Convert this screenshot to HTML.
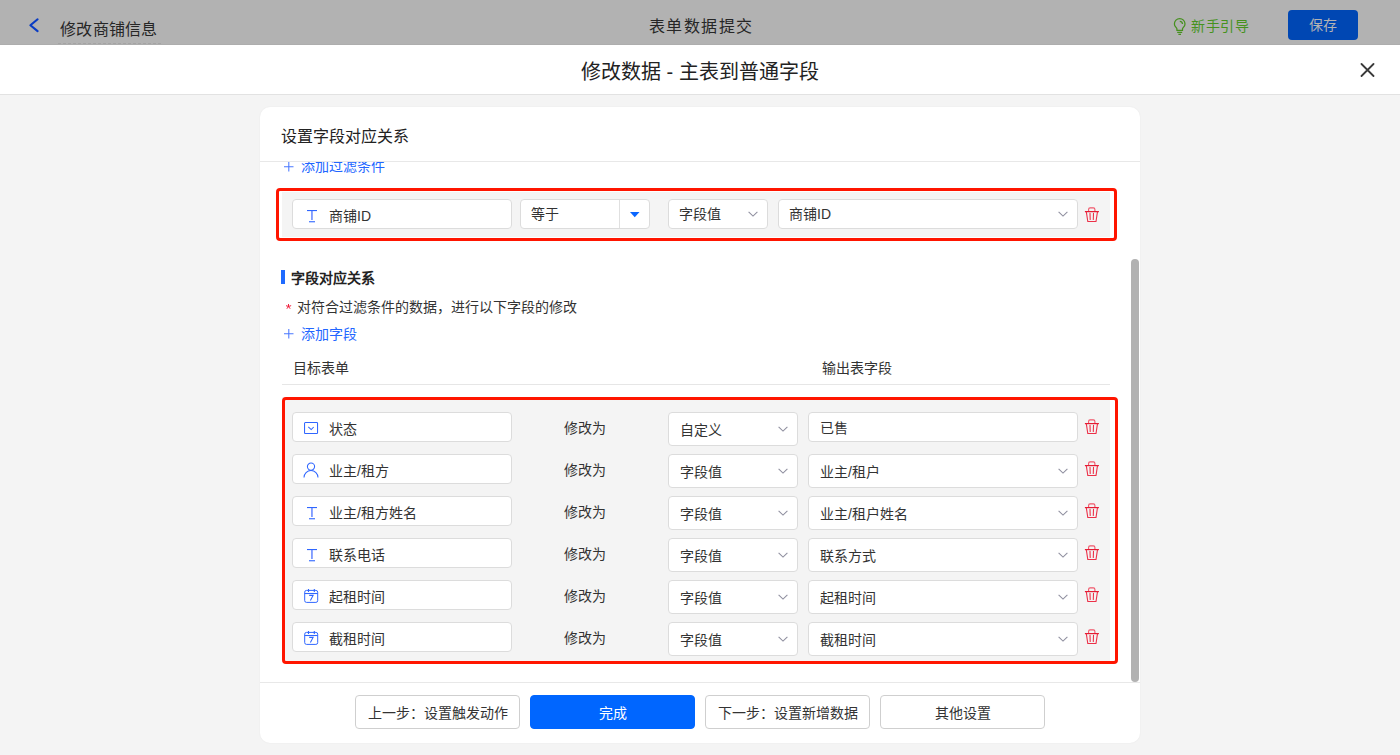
<!DOCTYPE html>
<html lang="zh-CN"><head><meta charset="utf-8">
<style>
*{box-sizing:border-box;margin:0;padding:0}
html,body{width:1400px;height:755px;overflow:hidden}
body{background:#f4f4f4;font-family:"Liberation Sans",sans-serif;color:#333;position:relative;font-size:14px}
.abs{position:absolute}
.t{position:absolute;white-space:nowrap;line-height:1}
#topbar{left:0;top:0;width:1400px;height:45px;background:#b2b2b2;border-bottom:1px solid #adadad}
#mhead{left:0;top:45px;width:1400px;height:50px;background:#fff;border-bottom:1px solid #e2e2e2}
#card{left:260px;top:107px;width:880px;height:636px;background:#fff;border-radius:10px;overflow:hidden;box-shadow:0 0 2px rgba(0,0,0,0.06)}
.inp{position:absolute;background:#fff;border:1px solid #dcdcdc;border-radius:4px;height:30px}
.gray{position:absolute;background:#f4f4f4}
.red{position:absolute;border:3px solid #ff1500;border-radius:4px}
.btn{position:absolute;top:588px;width:165px;height:34px;border:1px solid #cfcfcf;border-radius:4px;background:#fff;text-align:center;line-height:32px;padding-top:1px;font-size:14px;color:#333}
</style></head>
<body>
<div id="topbar" class="abs">
  <svg class="abs" style="left:28px;top:17px" width="13" height="17" viewBox="0 0 13 17"><path d="M9.6 2.3 L2.4 8.3 L9.6 14.1" fill="none" stroke="#0a3cc4" stroke-width="2.1" stroke-linecap="round" stroke-linejoin="round"/></svg>
  <div class="t" style="left:60px;top:22px;font-size:16px;color:#262626;letter-spacing:0.3px">修改商铺信息</div>
  <div class="abs" style="left:58px;top:43px;width:105px;height:1px;background:repeating-linear-gradient(90deg,#a4a4a4 0 3px,transparent 3px 5px)"></div>
  <div class="t" style="left:649px;top:19px;font-size:16px;color:#262626;letter-spacing:1.4px">表单数据提交</div>
  <svg class="abs" style="left:1173px;top:17px" width="14" height="19" viewBox="0 0 14 19"><path d="M3.9 13.4 V11.8 C3.9 10.6 1.4 9.6 1.4 6.9 A5.3 5.3 0 0 1 12 6.9 C12 9.6 9.5 10.6 9.5 11.8 V13.4 Z" fill="none" stroke="#46901e" stroke-width="1.25" stroke-linejoin="round"/><path d="M4.2 15.4 H9.2 M5.4 17.3 H8" stroke="#46901e" stroke-width="1.2"/><path d="M6.8 4.3 A2.9 2.9 0 0 1 9.5 7.1" fill="none" stroke="#46901e" stroke-width="1.3"/></svg>
  <div class="t" style="left:1191px;top:19px;font-size:14px;color:#46921e;letter-spacing:0.6px">新手引导</div>
  <div class="abs" style="left:1288px;top:10px;width:70px;height:30px;background:#0047b3;border-radius:4px"></div>
  <div class="t" style="left:1309px;top:18px;font-size:14px;color:#b3b3b3">保存</div>
</div>
<div id="mhead" class="abs">
  <div class="t" style="left:581px;top:17px;font-size:20px;color:#222">修改数据 - 主表到普通字段</div>
  <svg class="abs" style="left:1360px;top:18px" width="15" height="14" viewBox="0 0 15 14"><path d="M1.5 1 L13.5 13 M13.5 1 L1.5 13" stroke="#3a3a3a" stroke-width="1.8" stroke-linecap="round"/></svg>
</div>
<div id="card" class="abs">
  <div class="t" style="left:21px;top:22px;font-size:16px;color:#222">设置字段对应关系</div>
  <div class="abs" style="left:0;top:54px;width:880px;height:1px;background:#e8e8e8"></div>
  <div class="abs" id="scroll" style="left:0;top:55px;width:880px;height:520px;overflow:hidden">
<svg class="abs" style="left:24px;top:0px" width="10" height="10" viewBox="0 0 10 10"><path d="M4.8 0V9.5M0 4.8H9.5" stroke="#4a78ff" stroke-width="1.05"/></svg>
<div class="t" style="left:41px;top:-3px;font-size:14px;color:#2266ff;">添加过滤条件</div>
<div class="gray" style="left:22px;top:30px;width:828px;height:45px"></div>
<div class="inp" style="left:32px;top:37px;width:220px"></div>
<svg class="abs" style="left:47px;top:48px" width="11" height="13" viewBox="0 0 11 13"><rect x="0" y="0" width="10" height="1.1" fill="#2f66ff"/><rect x="4.3" y="1" width="1.3" height="9" fill="#4a72ff"/><rect x="2" y="11.2" width="6" height="1.1" fill="#2f66ff"/></svg>
<div class="t" style="left:69px;top:47px;font-size:14px;color:#333;">商铺ID</div>
<div class="inp" style="left:260px;top:37px;width:130px"><div class="abs" style="left:98px;top:0;width:1px;height:28px;background:#e0e0e0"></div></div>
<div class="t" style="left:271px;top:45px;font-size:14px;color:#333;">等于</div>
<svg class="abs" style="left:370px;top:50px" width="10" height="6" viewBox="0 0 10 6"><path d="M0 0 H9.5 L4.75 5.3 Z" fill="#0a66ff"/></svg>
<div class="inp" style="left:408px;top:37px;width:100px"></div>
<div class="t" style="left:419px;top:45px;font-size:14px;color:#333;">字段值</div>
<svg class="abs" style="left:488px;top:49px" width="11" height="7" viewBox="0 0 11 7"><path d="M0.6 0.8 L5 5.1 L9.4 0.8" fill="none" stroke="#9090a0" stroke-width="1.1"/></svg>
<div class="inp" style="left:518px;top:37px;width:300px"></div>
<div class="t" style="left:529px;top:45px;font-size:14px;color:#333;">商铺ID</div>
<svg class="abs" style="left:798px;top:49px" width="11" height="7" viewBox="0 0 11 7"><path d="M0.6 0.8 L5 5.1 L9.4 0.8" fill="none" stroke="#9090a0" stroke-width="1.1"/></svg>
<svg class="abs" style="left:824px;top:45px" width="16" height="16" viewBox="0 0 16 16"><path d="M4.6 4.3 V2.4 Q4.6 0.9 6.1 0.9 H9.4 Q10.9 0.9 10.9 2.4 V4.3" fill="none" stroke="#f0566a" stroke-width="1.1"/><path d="M0.9 4.6 H14.9" stroke="#e41a32" stroke-width="1.2"/><path d="M2.3 4.6 L3.8 14.5 H12.0 L13.5 4.6" fill="none" stroke="#ec3048" stroke-width="1.1"/><path d="M6.0 6.3 L6.2 12.5 M9.5 6.3 L9.3 12.5" stroke="#ec3048" stroke-width="1.1" stroke-linecap="round"/></svg>
<div class="red" style="left:16px;top:26px;width:841px;height:53px"></div>
<div class="abs" style="left:21px;top:108px;width:4px;height:14px;background:#1f6bff"></div>
<div class="t" style="left:31px;top:109px;font-size:14px;color:#222;font-weight:bold">字段对应关系</div>
<svg class="abs" style="left:26px;top:142px" width="6" height="6" viewBox="0 0 6 6"><path d="M2.5 2.5L2.50 0.10M2.5 2.5L4.78 1.76M2.5 2.5L3.91 4.44M2.5 2.5L1.09 4.44M2.5 2.5L0.22 1.76" stroke="#f01e3c" stroke-width="1" stroke-linecap="round"/></svg>
<div class="t" style="left:37px;top:138px;font-size:14px;color:#333;">对符合过滤条件的数据，进行以下字段的修改</div>
<svg class="abs" style="left:24px;top:167px" width="10" height="10" viewBox="0 0 10 10"><path d="M4.8 0V9.5M0 4.8H9.5" stroke="#4a78ff" stroke-width="1.05"/></svg>
<div class="t" style="left:41px;top:165px;font-size:14px;color:#2266ff;">添加字段</div>
<div class="t" style="left:33px;top:199px;font-size:14px;color:#333;">目标表单</div>
<div class="t" style="left:562px;top:199px;font-size:14px;color:#333;">输出表字段</div>
<div class="abs" style="left:22px;top:222px;width:828px;height:1px;background:#e6e6e6"></div>
<div class="gray" style="left:22px;top:235px;width:828px;height:264px"></div>
<div class="inp" style="left:32px;top:250px;width:220px"></div>
<svg class="abs" style="left:44px;top:260px" width="15" height="13" viewBox="0 0 15 13"><rect x="0.55" y="0.55" width="13" height="11" rx="0.8" fill="none" stroke="#2f66ff" stroke-width="1.05"/><path d="M4.3 4.9 L7.2 7.6 L9.7 5" fill="none" stroke="#2f66ff" stroke-width="1.05"/></svg>
<div class="t" style="left:69px;top:260px;font-size:14px;color:#333;">状态</div>
<div class="t" style="left:304px;top:259px;font-size:14px;color:#333;">修改为</div>
<div class="inp" style="left:408px;top:250px;width:130px;height:34px"></div>
<div class="t" style="left:420px;top:261px;font-size:14px;color:#333;">自定义</div>
<svg class="abs" style="left:518px;top:264px" width="11" height="7" viewBox="0 0 11 7"><path d="M0.6 0.8 L5 5.1 L9.4 0.8" fill="none" stroke="#9090a0" stroke-width="1.1"/></svg>
<div class="inp" style="left:548px;top:250px;width:270px"></div>
<div class="t" style="left:560px;top:259px;font-size:14px;color:#333;">已售</div>
<svg class="abs" style="left:824px;top:257px" width="16" height="16" viewBox="0 0 16 16"><path d="M4.6 4.3 V2.4 Q4.6 0.9 6.1 0.9 H9.4 Q10.9 0.9 10.9 2.4 V4.3" fill="none" stroke="#f0566a" stroke-width="1.1"/><path d="M0.9 4.6 H14.9" stroke="#e41a32" stroke-width="1.2"/><path d="M2.3 4.6 L3.8 14.5 H12.0 L13.5 4.6" fill="none" stroke="#ec3048" stroke-width="1.1"/><path d="M6.0 6.3 L6.2 12.5 M9.5 6.3 L9.3 12.5" stroke="#ec3048" stroke-width="1.1" stroke-linecap="round"/></svg>
<div class="inp" style="left:32px;top:292px;width:220px"></div>
<svg class="abs" style="left:43px;top:300px" width="16" height="16" viewBox="0 0 16 16"><circle cx="8" cy="4.6" r="3.6" fill="none" stroke="#2f66ff" stroke-width="1.05"/><path d="M1 15.5 A7 7 0 0 1 15 15.5" fill="none" stroke="#2f66ff" stroke-width="1.05"/></svg>
<div class="t" style="left:69px;top:302px;font-size:14px;color:#333;">业主/租方</div>
<div class="t" style="left:304px;top:301px;font-size:14px;color:#333;">修改为</div>
<div class="inp" style="left:408px;top:292px;width:130px;height:34px"></div>
<div class="t" style="left:420px;top:303px;font-size:14px;color:#333;">字段值</div>
<svg class="abs" style="left:518px;top:306px" width="11" height="7" viewBox="0 0 11 7"><path d="M0.6 0.8 L5 5.1 L9.4 0.8" fill="none" stroke="#9090a0" stroke-width="1.1"/></svg>
<div class="inp" style="left:548px;top:292px;width:270px;height:34px"></div>
<div class="t" style="left:560px;top:303px;font-size:14px;color:#333;">业主/租户</div>
<svg class="abs" style="left:798px;top:306px" width="11" height="7" viewBox="0 0 11 7"><path d="M0.6 0.8 L5 5.1 L9.4 0.8" fill="none" stroke="#9090a0" stroke-width="1.1"/></svg>
<svg class="abs" style="left:824px;top:299px" width="16" height="16" viewBox="0 0 16 16"><path d="M4.6 4.3 V2.4 Q4.6 0.9 6.1 0.9 H9.4 Q10.9 0.9 10.9 2.4 V4.3" fill="none" stroke="#f0566a" stroke-width="1.1"/><path d="M0.9 4.6 H14.9" stroke="#e41a32" stroke-width="1.2"/><path d="M2.3 4.6 L3.8 14.5 H12.0 L13.5 4.6" fill="none" stroke="#ec3048" stroke-width="1.1"/><path d="M6.0 6.3 L6.2 12.5 M9.5 6.3 L9.3 12.5" stroke="#ec3048" stroke-width="1.1" stroke-linecap="round"/></svg>
<div class="inp" style="left:32px;top:334px;width:220px"></div>
<svg class="abs" style="left:47px;top:345px" width="11" height="13" viewBox="0 0 11 13"><rect x="0" y="0" width="10" height="1.1" fill="#2f66ff"/><rect x="4.3" y="1" width="1.3" height="9" fill="#4a72ff"/><rect x="2" y="11.2" width="6" height="1.1" fill="#2f66ff"/></svg>
<div class="t" style="left:69px;top:344px;font-size:14px;color:#333;">业主/租方姓名</div>
<div class="t" style="left:304px;top:343px;font-size:14px;color:#333;">修改为</div>
<div class="inp" style="left:408px;top:334px;width:130px;height:34px"></div>
<div class="t" style="left:420px;top:345px;font-size:14px;color:#333;">字段值</div>
<svg class="abs" style="left:518px;top:348px" width="11" height="7" viewBox="0 0 11 7"><path d="M0.6 0.8 L5 5.1 L9.4 0.8" fill="none" stroke="#9090a0" stroke-width="1.1"/></svg>
<div class="inp" style="left:548px;top:334px;width:270px;height:34px"></div>
<div class="t" style="left:560px;top:345px;font-size:14px;color:#333;">业主/租户姓名</div>
<svg class="abs" style="left:798px;top:348px" width="11" height="7" viewBox="0 0 11 7"><path d="M0.6 0.8 L5 5.1 L9.4 0.8" fill="none" stroke="#9090a0" stroke-width="1.1"/></svg>
<svg class="abs" style="left:824px;top:341px" width="16" height="16" viewBox="0 0 16 16"><path d="M4.6 4.3 V2.4 Q4.6 0.9 6.1 0.9 H9.4 Q10.9 0.9 10.9 2.4 V4.3" fill="none" stroke="#f0566a" stroke-width="1.1"/><path d="M0.9 4.6 H14.9" stroke="#e41a32" stroke-width="1.2"/><path d="M2.3 4.6 L3.8 14.5 H12.0 L13.5 4.6" fill="none" stroke="#ec3048" stroke-width="1.1"/><path d="M6.0 6.3 L6.2 12.5 M9.5 6.3 L9.3 12.5" stroke="#ec3048" stroke-width="1.1" stroke-linecap="round"/></svg>
<div class="inp" style="left:32px;top:376px;width:220px"></div>
<svg class="abs" style="left:47px;top:387px" width="11" height="13" viewBox="0 0 11 13"><rect x="0" y="0" width="10" height="1.1" fill="#2f66ff"/><rect x="4.3" y="1" width="1.3" height="9" fill="#4a72ff"/><rect x="2" y="11.2" width="6" height="1.1" fill="#2f66ff"/></svg>
<div class="t" style="left:69px;top:386px;font-size:14px;color:#333;">联系电话</div>
<div class="t" style="left:304px;top:385px;font-size:14px;color:#333;">修改为</div>
<div class="inp" style="left:408px;top:376px;width:130px;height:34px"></div>
<div class="t" style="left:420px;top:387px;font-size:14px;color:#333;">字段值</div>
<svg class="abs" style="left:518px;top:390px" width="11" height="7" viewBox="0 0 11 7"><path d="M0.6 0.8 L5 5.1 L9.4 0.8" fill="none" stroke="#9090a0" stroke-width="1.1"/></svg>
<div class="inp" style="left:548px;top:376px;width:270px;height:34px"></div>
<div class="t" style="left:560px;top:387px;font-size:14px;color:#333;">联系方式</div>
<svg class="abs" style="left:798px;top:390px" width="11" height="7" viewBox="0 0 11 7"><path d="M0.6 0.8 L5 5.1 L9.4 0.8" fill="none" stroke="#9090a0" stroke-width="1.1"/></svg>
<svg class="abs" style="left:824px;top:383px" width="16" height="16" viewBox="0 0 16 16"><path d="M4.6 4.3 V2.4 Q4.6 0.9 6.1 0.9 H9.4 Q10.9 0.9 10.9 2.4 V4.3" fill="none" stroke="#f0566a" stroke-width="1.1"/><path d="M0.9 4.6 H14.9" stroke="#e41a32" stroke-width="1.2"/><path d="M2.3 4.6 L3.8 14.5 H12.0 L13.5 4.6" fill="none" stroke="#ec3048" stroke-width="1.1"/><path d="M6.0 6.3 L6.2 12.5 M9.5 6.3 L9.3 12.5" stroke="#ec3048" stroke-width="1.1" stroke-linecap="round"/></svg>
<div class="inp" style="left:32px;top:418px;width:220px"></div>
<svg class="abs" style="left:44px;top:427px" width="15" height="15" viewBox="0 0 15 15"><rect x="0.7" y="1.4" width="13" height="12" rx="1.8" fill="none" stroke="#2f66ff" stroke-width="1.0"/><path d="M0.7 4.5 H13.7" stroke="#2f66ff" stroke-width="1.1"/><path d="M4.5 0 V3 M10.3 0 V3" stroke="#2f66ff" stroke-width="1.1"/><path d="M5.2 6.4 H9.1 L6.4 11.6" fill="none" stroke="#2f66ff" stroke-width="1.1"/></svg>
<div class="t" style="left:69px;top:428px;font-size:14px;color:#333;">起租时间</div>
<div class="t" style="left:304px;top:427px;font-size:14px;color:#333;">修改为</div>
<div class="inp" style="left:408px;top:418px;width:130px;height:34px"></div>
<div class="t" style="left:420px;top:429px;font-size:14px;color:#333;">字段值</div>
<svg class="abs" style="left:518px;top:432px" width="11" height="7" viewBox="0 0 11 7"><path d="M0.6 0.8 L5 5.1 L9.4 0.8" fill="none" stroke="#9090a0" stroke-width="1.1"/></svg>
<div class="inp" style="left:548px;top:418px;width:270px;height:34px"></div>
<div class="t" style="left:560px;top:429px;font-size:14px;color:#333;">起租时间</div>
<svg class="abs" style="left:798px;top:432px" width="11" height="7" viewBox="0 0 11 7"><path d="M0.6 0.8 L5 5.1 L9.4 0.8" fill="none" stroke="#9090a0" stroke-width="1.1"/></svg>
<svg class="abs" style="left:824px;top:425px" width="16" height="16" viewBox="0 0 16 16"><path d="M4.6 4.3 V2.4 Q4.6 0.9 6.1 0.9 H9.4 Q10.9 0.9 10.9 2.4 V4.3" fill="none" stroke="#f0566a" stroke-width="1.1"/><path d="M0.9 4.6 H14.9" stroke="#e41a32" stroke-width="1.2"/><path d="M2.3 4.6 L3.8 14.5 H12.0 L13.5 4.6" fill="none" stroke="#ec3048" stroke-width="1.1"/><path d="M6.0 6.3 L6.2 12.5 M9.5 6.3 L9.3 12.5" stroke="#ec3048" stroke-width="1.1" stroke-linecap="round"/></svg>
<div class="inp" style="left:32px;top:460px;width:220px"></div>
<svg class="abs" style="left:44px;top:469px" width="15" height="15" viewBox="0 0 15 15"><rect x="0.7" y="1.4" width="13" height="12" rx="1.8" fill="none" stroke="#2f66ff" stroke-width="1.0"/><path d="M0.7 4.5 H13.7" stroke="#2f66ff" stroke-width="1.1"/><path d="M4.5 0 V3 M10.3 0 V3" stroke="#2f66ff" stroke-width="1.1"/><path d="M5.2 6.4 H9.1 L6.4 11.6" fill="none" stroke="#2f66ff" stroke-width="1.1"/></svg>
<div class="t" style="left:69px;top:470px;font-size:14px;color:#333;">截租时间</div>
<div class="t" style="left:304px;top:469px;font-size:14px;color:#333;">修改为</div>
<div class="inp" style="left:408px;top:460px;width:130px;height:34px"></div>
<div class="t" style="left:420px;top:471px;font-size:14px;color:#333;">字段值</div>
<svg class="abs" style="left:518px;top:474px" width="11" height="7" viewBox="0 0 11 7"><path d="M0.6 0.8 L5 5.1 L9.4 0.8" fill="none" stroke="#9090a0" stroke-width="1.1"/></svg>
<div class="inp" style="left:548px;top:460px;width:270px;height:34px"></div>
<div class="t" style="left:560px;top:471px;font-size:14px;color:#333;">截租时间</div>
<svg class="abs" style="left:798px;top:474px" width="11" height="7" viewBox="0 0 11 7"><path d="M0.6 0.8 L5 5.1 L9.4 0.8" fill="none" stroke="#9090a0" stroke-width="1.1"/></svg>
<svg class="abs" style="left:824px;top:467px" width="16" height="16" viewBox="0 0 16 16"><path d="M4.6 4.3 V2.4 Q4.6 0.9 6.1 0.9 H9.4 Q10.9 0.9 10.9 2.4 V4.3" fill="none" stroke="#f0566a" stroke-width="1.1"/><path d="M0.9 4.6 H14.9" stroke="#e41a32" stroke-width="1.2"/><path d="M2.3 4.6 L3.8 14.5 H12.0 L13.5 4.6" fill="none" stroke="#ec3048" stroke-width="1.1"/><path d="M6.0 6.3 L6.2 12.5 M9.5 6.3 L9.3 12.5" stroke="#ec3048" stroke-width="1.1" stroke-linecap="round"/></svg>
<div class="red" style="left:22px;top:235px;width:836px;height:267px"></div>
  </div>
  <div class="abs" style="left:0;top:575px;width:880px;height:1px;background:#e8e8e8"></div>
  <div class="btn" style="left:95px">上一步：设置触发动作</div>
  <div class="btn" style="left:270px;background:#0066ff;border-color:#0066ff;color:#fff">完成</div>
  <div class="btn" style="left:445px">下一步：设置新增数据</div>
  <div class="btn" style="left:620px">其他设置</div>
  <div class="abs" style="left:871px;top:152px;width:8px;height:423px;background:#b2b2b2;border-radius:4px"></div>
</div>
</body></html>
